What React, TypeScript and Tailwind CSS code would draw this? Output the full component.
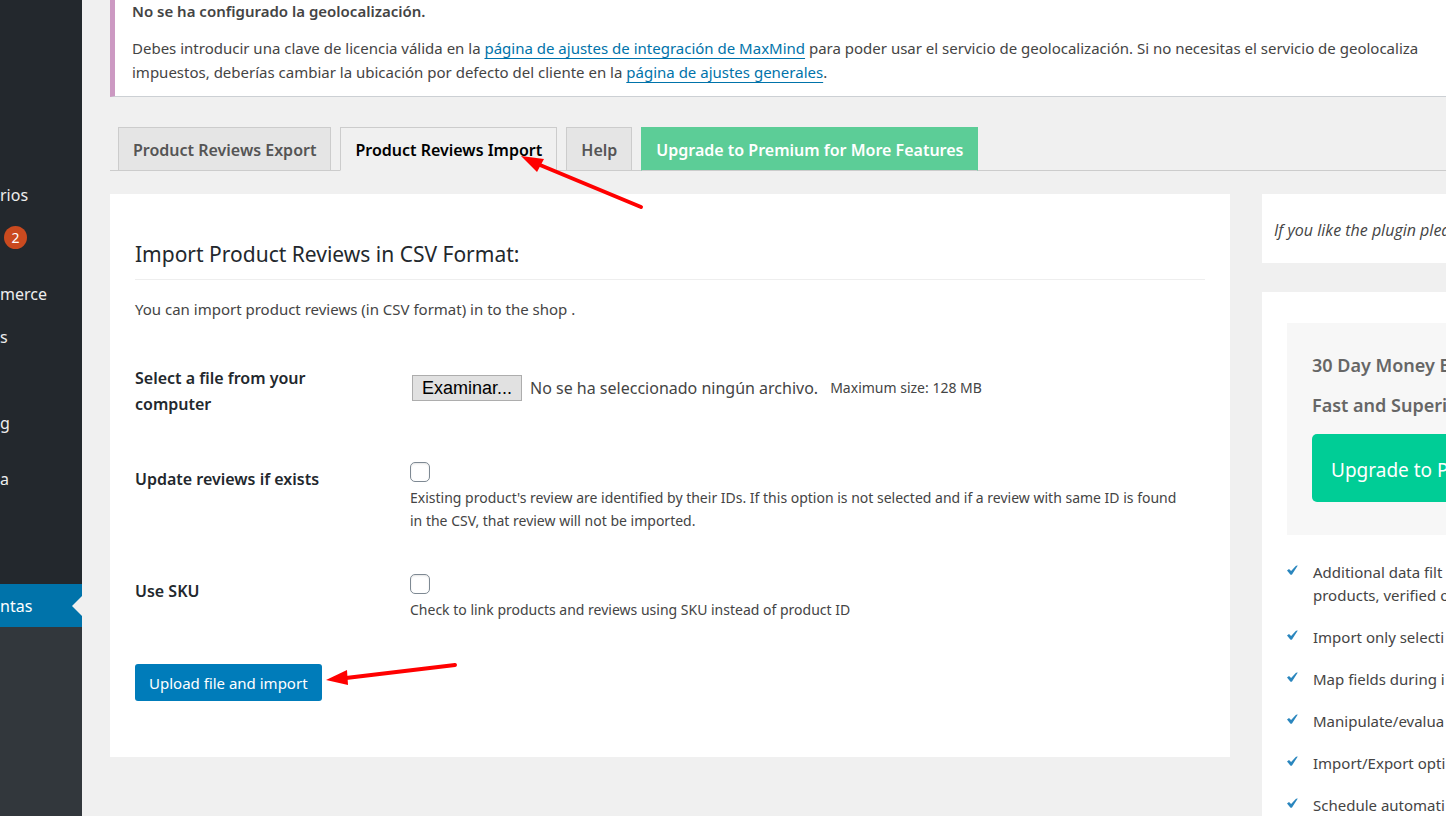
import React from "react";

type MenuEntry = { text: string; badge?: boolean };

const upperMenu: MenuEntry[] = [{ text: "rios" }, { text: "2", badge: true }];
const middleMenu: MenuEntry[] = [{ text: "merce" }, { text: "s" }, { text: "" }, { text: "g" }];
const features = [
  <>Additional data filt<br />products, verified o</>,
  <>Import only selecti</>,
  <>Map fields during i</>,
  <>Manipulate/evalua</>,
  <>Import/Export opti</>,
  <>Schedule automati</>,
];

function MenuRows({ items }: { items: MenuEntry[] }) {
  return (
    <ul>
      {items.map((item, i) => (
        <li key={i} className="flex h-[43px] items-center">
          {item.badge ? (
            <a href="#" className="ml-1 flex size-[23px] items-center justify-center rounded-full bg-[#ca4a1f] text-sm text-white">{item.text}</a>
          ) : item.text ? (
            <a href="#" className="text-base text-[#eeeeee]">{item.text}</a>
          ) : null}
        </li>
      ))}
    </ul>
  );
}

function Sidebar() {
  return (
    <nav className="flex w-[82px] shrink-0 flex-col overflow-hidden bg-[#32373c]">
      <div className="bg-[#23282d] pt-[173px] pb-[84px]">
        <MenuRows items={upperMenu} />
        <div className="h-[13px]" />
        <MenuRows items={middleMenu} />
        <div className="h-[13px]" />
        <MenuRows items={[{ text: "a" }]} />
      </div>
      <a href="#" className="flex h-[43px] items-center justify-between bg-[#0073aa] text-base text-white">
        ntas
        <svg className="h-5 w-[10px]" viewBox="0 0 10 20"><path d="M10 0 0 10l10 10z" fill="#f0f0f0" /></svg>
      </a>
    </nav>
  );
}

function Tab({ children, kind }: { children: React.ReactNode; kind: "idle" | "active" | "premium" }) {
  const base = "relative -mb-px flex h-11 items-center border px-[14px] pt-0.5 text-base font-semibold ";
  const look = {
    idle: "border-[#cccccc] bg-[#e5e5e5] text-[#555555]",
    active: "border-[#cccccc] border-b-[#f0f0f0] bg-[#f0f0f0] text-black",
    premium: "border-[#5ccd97] border-b-[#cccccc] bg-[#5ccd97] text-white",
  }[kind];
  return <a href="#" className={base + look}>{children}</a>;
}

function CheckRow({ id, label, children, className }: { id: string; label: string; children: React.ReactNode; className: string }) {
  return (
    <div className={"flex " + className}>
      <label htmlFor={id} className="w-[275px] shrink-0 pt-1 text-base leading-[26px] font-semibold text-[#23282d]">{label}</label>
      <div>
        <input id={id} type="checkbox" className="block size-5 appearance-none rounded-[5px] border border-[#7e8993] bg-white shadow-[inset_0_1px_2px_rgba(0,0,0,0.1)]" />
        <p className="mt-1 text-sm leading-[23px]">{children}</p>
      </div>
    </div>
  );
}

export default function App() {
  return (
    <div className="relative flex h-screen overflow-hidden bg-[#f0f0f0] font-['Noto_Sans','Open_Sans',sans-serif] text-[15px] text-[#444444]">
      <Sidebar />
      <main className="min-w-0 flex-1 pl-7">
        <section className="overflow-hidden border-b border-l-[5px] border-b-[#ccd0d4] border-l-[#cc99c2] bg-white pb-3 pl-[17px] leading-6 whitespace-nowrap">
          <p className="-mt-px font-semibold">No se ha configurado la geolocalización.</p>
          <p className="mt-[13px]">
            Debes introducir una clave de licencia válida en la <a href="#" className="text-[#0073aa] underline underline-offset-4">página de ajustes de integración de MaxMind</a> para poder usar el servicio de geolocalización. Si no necesitas el servicio de geolocaliza
            <br />
            impuestos, deberías cambiar la ubicación por defecto del cliente en la <a href="#" className="text-[#0073aa] underline underline-offset-4">página de ajustes generales</a>.
          </p>
        </section>
        <nav className="mt-[30px] flex gap-[9px] border-b border-[#cccccc] pl-2">
          <Tab kind="idle">Product Reviews Export</Tab>
          <Tab kind="active">Product Reviews Import</Tab>
          <Tab kind="idle">Help</Tab>
          <Tab kind="premium">Upgrade to Premium for More Features</Tab>
        </nav>
        <div className="mt-[23px] flex items-start gap-8">
          <form className="min-w-0 flex-1 bg-white px-[25px] pt-11 pb-14" onSubmit={(e) => e.preventDefault()}>
            <h2 className="border-b border-[#eeeeee] pb-2 text-[21px] leading-[33px] text-[#23282d]">Import Product Reviews in CSV Format:</h2>
            <p className="mt-[17px] leading-6">You can import product reviews (in CSV format) in to the shop .</p>
            <div className="mt-11 flex">
              <label htmlFor="upload" className="w-[275px] shrink-0 pr-20 text-base leading-[26px] font-semibold text-[#23282d]">Select a file from your computer</label>
              <div className="mt-[10px] flex h-[26px] items-center pl-0.5">
                <input id="upload" type="file" className="sr-only" />
                <label htmlFor="upload" className="flex h-[26px] w-[110px] items-center justify-center border border-[#adadad] bg-[#e1e1e1] font-['Liberation_Sans',sans-serif] text-lg text-black">Examinar...</label>
                <span className="ml-2 text-base">No se ha seleccionado ningún archivo.</span>
                <small className="ml-3 text-sm">Maximum size: 128 MB</small>
              </div>
            </div>
            <CheckRow id="update" label="Update reviews if exists" className="mt-[45px]">
              Existing product's review are identified by their IDs. If this option is not selected and if a review with same ID is found<br />in the CSV, that review will not be imported.
            </CheckRow>
            <CheckRow id="sku" label="Use SKU" className="mt-[42px]">
              Check to link products and reviews using SKU instead of product ID
            </CheckRow>
            <button type="submit" className="mt-[43px] flex h-[37px] items-center rounded-[3px] bg-[#007cba] px-[14px] pt-0.5 text-[15px] text-white">Upload file and import</button>
          </form>
          <aside className="flex w-[184px] shrink-0 flex-col gap-[29px] overflow-hidden whitespace-nowrap">
            <p className="h-[69px] bg-white px-3 pt-6 font-['Open_Sans','Noto_Sans',sans-serif] text-base leading-6 italic">If you like the plugin plea</p>
            <div className="bg-white pt-[31px] pb-8 pl-[25px]">
              <div className="bg-[#f7f7f7] pt-[22px] pb-[33px] pl-[25px]">
                <p className="text-lg leading-10 font-semibold text-[#666666]">30 Day Money B</p>
                <p className="text-lg leading-10 font-semibold text-[#666666]">Fast and Superi</p>
                <a href="#" className="mt-[9px] flex h-[68px] items-center rounded-l-[5px] bg-[#00cd96] pt-1 pl-[19px] text-[19px] text-white">Upgrade to P</a>
              </div>
              <ul className="mt-[26px] flex flex-col gap-[19px] leading-[23px]">
                {features.map((text, i) => (
                  <li key={i} className="flex items-start gap-[15px]">
                    <svg className="mt-1 h-[11px] w-[11px] shrink-0" viewBox="0 0 11 11"><path d="M0 5.4 2 4l2.1 2L9 .8l1.8-.2L5 9.4Q4.2 10.3 3.3 9.4z" fill="#2a86be" /></svg>
                    <span>{text}</span>
                  </li>
                ))}
              </ul>
            </div>
          </aside>
        </div>
      </main>
      <svg className="pointer-events-none absolute top-[150px] left-[515px] h-[62px] w-[130px]" viewBox="515 150 130 62">
        <path d="M641 207 540 165" stroke="#f00" strokeWidth="4" strokeLinecap="round" />
        <path d="M521 156 544 159 537 172z" fill="#f00" />
      </svg>
      <svg className="pointer-events-none absolute top-[658px] left-[322px] h-[32px] w-[138px]" viewBox="322 658 138 32">
        <path d="M455 665 346 678" stroke="#f00" strokeWidth="4" strokeLinecap="round" />
        <path d="M326 680 347 670 348 685z" fill="#f00" />
      </svg>
    </div>
  );
}
